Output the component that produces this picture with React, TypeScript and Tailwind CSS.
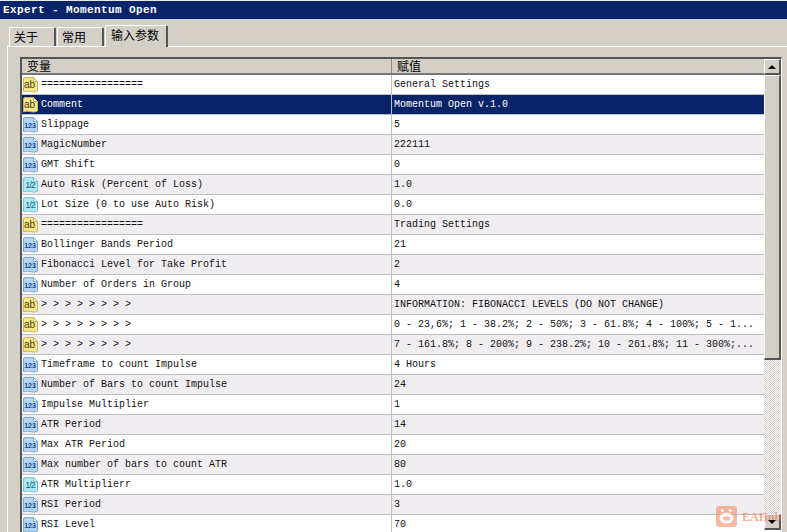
const rows: [string, string, string][] = [
  ["ab", "=================", "General Settings"],
  ["ab", "Comment", "Momentum Open v.1.0"],
  ["123", "Slippage", "5"],
  ["123", "MagicNumber", "222111"],
  ["123", "GMT Shift", "0"],
  ["ve", "Auto Risk (Percent of Loss)", "1.0"],
  ["ve", "Lot Size (0 to use Auto Risk)", "0.0"],
  ["ab", "=================", "Trading Settings"],
  ["123", "Bollinger Bands Period", "21"],
  ["123", "Fibonacci Level for Take Profit", "2"],
  ["123", "Number of Orders in Group", "4"],
  ["ab", "> > > > > > > >", "INFORMATION: FIBONACCI LEVELS (DO NOT CHANGE)"],
  ["ab", "> > > > > > > >", "0 - 23,6%; 1 - 38.2%; 2 - 50%; 3 - 61.8%; 4 - 100%; 5 - 1..."],
  ["ab", "> > > > > > > >", "7 - 161.8%; 8 - 200%; 9 - 238.2%; 10 - 261.8%; 11 - 300%;..."],
  ["123", "Timeframe to count Impulse", "4 Hours"],
  ["123", "Number of Bars to count Impulse", "24"],
  ["123", "Impulse Multiplier", "1"],
  ["123", "ATR Period", "14"],
  ["123", "Max ATR Period", "20"],
  ["123", "Max number of bars to count ATR", "80"],
  ["ve", "ATR Multiplierr", "1.0"],
  ["123", "RSI Period", "3"],
  ["123", "RSI Level", "70"],
];

function TypeIcon({ kind }: { kind: string }) {
  const c =
    kind === "ab"
      ? { fill: "#f5e68c", edge: "#d0b558", text: "#4a3c0c" }
      : kind === "123"
        ? { fill: "#b4d4f2", edge: "#7aa8d8", text: "#14478a" }
        : { fill: "#aee8f2", edge: "#78c4d8", text: "#14688c" };
  return (
    <svg width="17" height="18" viewBox="0 0 17 18" className="shrink-0">
      <path
        d="M1.5 3Q1.5 1.5 3 1.5H11.5L15.5 5.5V15Q12 16.8 8.5 15.6T1.5 15.8Z"
        fill={c.fill}
        stroke={c.edge}
      />
      <path d="M11.5 1.5V5.5H15.5Z" fill="#ffffff" stroke={c.edge} />
      {kind === "ab" && (
        <text x="7.5" y="12" textAnchor="middle" fontSize="10" fontFamily="'Liberation Sans', sans-serif" fill={c.text}>
          ab
        </text>
      )}
      {kind === "123" && (
        <text x="8" y="12" textAnchor="middle" fontSize="7" fontWeight="700" fontFamily="'Liberation Sans', sans-serif" fill={c.text}>
          123
        </text>
      )}
      {kind === "ve" && (
        <text x="8" y="12" textAnchor="middle" fontSize="9" letterSpacing="-1" fontFamily="'Liberation Sans', sans-serif" fill={c.text}>
          1/2
        </text>
      )}
    </svg>
  );
}

function Tab({ label, active }: { label: string; active?: boolean }) {
  return (
    <div
      className={
        active
          ? "h-[22px] w-[63px] -mb-px z-10 pl-[5px] pt-[2px] bg-[#d4d0c8] border-t border-l border-white border-r-2 border-r-[#555555] rounded-t-[2px] text-[12px] leading-[14px] text-black"
          : "h-[19px] w-[47px] pl-[4px] pt-[2px] bg-[#d4d0c8] border-t border-l border-white border-r-2 border-r-[#555555] rounded-t-[2px] text-[12px] leading-[14px] text-black"
      }
    >
      {label}
    </div>
  );
}

export default function App() {
  return (
    <div
      className="w-[787px] h-[532px] overflow-hidden bg-[#d4d0c8] relative flex flex-col"
      style={{ fontFamily: "'Liberation Mono', 'Noto Sans CJK SC', monospace" }}
    >
      <div className="h-px shrink-0 bg-[#e8e8f0]" />
      <div className="h-[18px] shrink-0 bg-[#0a246a] text-white text-[11px] font-bold leading-[18px] pl-[3px] whitespace-pre tracking-[0.4px]">
        Expert - Momentum Open
      </div>
      <div className="h-px shrink-0 bg-[#c8cce0]" />
      <div
        className="flex items-end pl-[9px] mt-[7px] h-[19px] shrink-0 gap-px relative z-10"
        style={{ fontFamily: "'Noto Sans CJK SC', sans-serif" }}
      >
        <Tab label="关于" />
        <Tab label="常用" />
        <Tab label="输入参数" active />
      </div>
      <div className="flex-1 min-h-0 ml-[7px] border-t border-l border-white pl-[12px] pt-[10px]">
        <div className="w-[762px] h-[475px] overflow-hidden border-t-2 border-l-2 border-r border-[#555555] border-r-white bg-white flex items-start">
          <div className="flex-1 min-w-0 flex flex-col">
            <div
              className="h-[16px] flex bg-[#d4d0c8] border-b-2 border-[#777777] text-[12px] leading-[14px] text-black shrink-0"
              style={{ fontFamily: "'Noto Sans CJK SC', sans-serif" }}
            >
              <div className="w-[370px] pl-[5px] border-r border-[#888888]">变量</div>
              <div className="flex-1 pl-[5px]">赋值</div>
            </div>
            {rows.map((r, i) => (
              <div
                key={i}
                className={
                  "h-[20px] shrink-0 flex items-center text-[10px] border-b border-[#c0c0c0] " +
                  (i === 1
                    ? "bg-[#0a246a] text-white"
                    : i % 2 === 1
                      ? "bg-[#f0edf0] text-[#111111]"
                      : "bg-white text-[#111111]")
                }
              >
                <div className="w-[370px] h-full shrink-0 flex items-center border-r border-[#c0c0c0] gap-[2px] whitespace-pre">
                  <TypeIcon kind={r[0]} />
                  <span>{r[1]}</span>
                </div>
                <div className="flex-1 pl-[2px] whitespace-pre overflow-hidden">{r[2]}</div>
              </div>
            ))}
          </div>
          <div className="w-[17px] h-[471px] shrink-0 flex flex-col bg-[#d4d0c8]">
            <div className="h-[16px] shrink-0 bg-[#d4d0c8] border-t border-l border-white border-r-2 border-b-2 border-r-[#555555] border-b-[#555555] flex items-center justify-center">
              <div className="w-0 h-0 border-x-[4px] border-x-transparent border-b-[4px] border-b-black" />
            </div>
            <div className="h-[285px] shrink-0 bg-[#d4d0c8] border-t border-l border-white border-r-2 border-b-2 border-r-[#555555] border-b-[#555555]" />
            <div className="flex-1 min-h-0 bg-[repeating-conic-gradient(#ffffff_0_25%,#d4d0c8_0_50%)] bg-[length:2px_2px]" />
            <div className="h-[16px] shrink-0 bg-[#d4d0c8] border-t border-l border-white border-r-2 border-b-2 border-r-[#555555] border-b-[#555555] flex items-center justify-center">
              <div className="w-0 h-0 relative z-20 border-x-[4px] border-x-transparent border-t-[4px] border-t-black" />
            </div>
          </div>
        </div>
      </div>
      <div className="absolute left-[716px] top-[506px] flex items-center gap-[5px] text-[#f0764e] opacity-60">
        <svg width="21" height="21" viewBox="0 0 21 21">
          <rect width="21" height="21" rx="3" fill="#f58a66" />
          <circle cx="6.5" cy="4.5" r="1.6" fill="#fff" />
          <circle cx="14.5" cy="4.5" r="1.6" fill="#fff" />
          <ellipse cx="10.5" cy="12" rx="7" ry="5.5" fill="#fff" />
          <ellipse cx="10.5" cy="12.5" rx="3.5" ry="2.2" fill="#f58a66" />
        </svg>
        <span className="text-[12px] font-bold" style={{ fontFamily: "'Liberation Serif', serif" }}>EAHub</span>
      </div>
    </div>
  );
}
